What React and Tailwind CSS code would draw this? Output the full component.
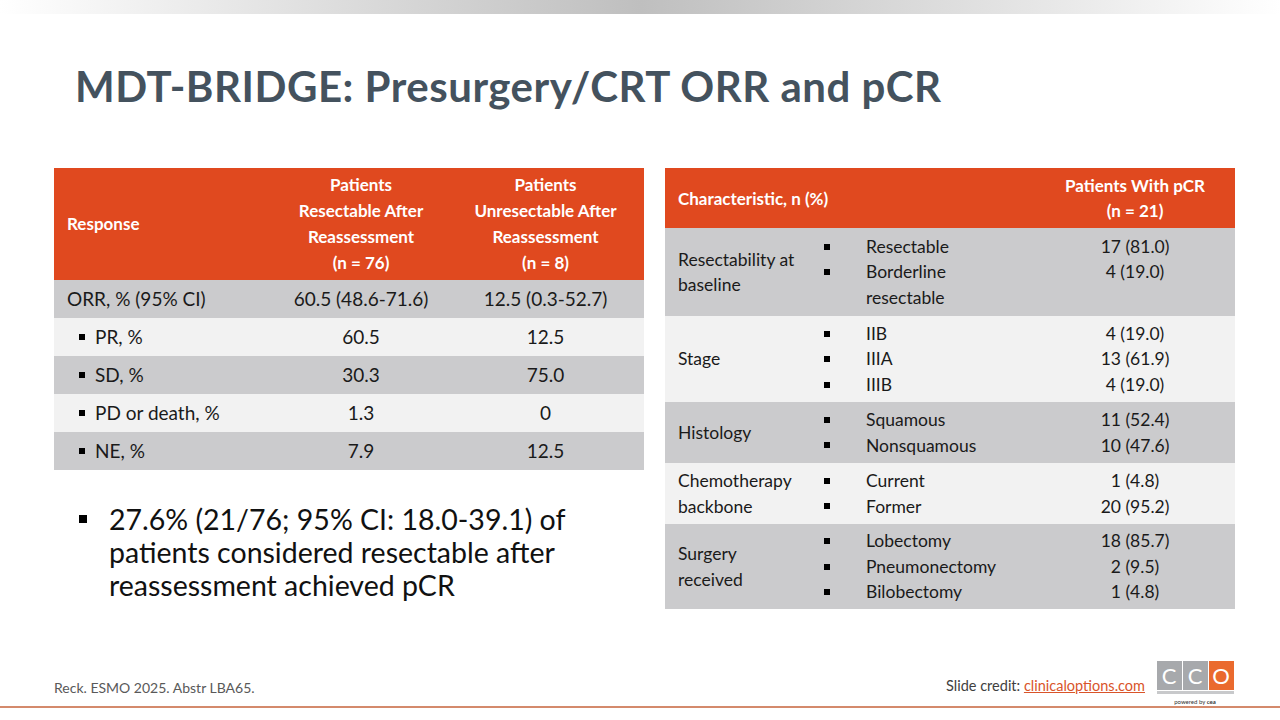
const font = { fontFamily: "Lato, 'Open Sans', sans-serif" };

function Sq() {
  return <span className="block w-[6px] h-[6px] bg-black shrink-0" />;
}

const leftRows = [
  { label: "ORR, % (95% CI)", a: "60.5 (48.6-71.6)", b: "12.5 (0.3-52.7)", bullet: false, bg: "bg-[#cbcbcd]" },
  { label: "PR, %", a: "60.5", b: "12.5", bullet: true, bg: "bg-[#f2f2f2]" },
  { label: "SD, %", a: "30.3", b: "75.0", bullet: true, bg: "bg-[#cbcbcd]" },
  { label: "PD or death, %", a: "1.3", b: "0", bullet: true, bg: "bg-[#f2f2f2]" },
  { label: "NE, %", a: "7.9", b: "12.5", bullet: true, bg: "bg-[#cbcbcd]" },
];

const rightRows = [
  { label: ["Resectability at", "baseline"], items: ["Resectable", "Borderline", "resectable"], vals: ["17 (81.0)", "4 (19.0)", ""], noBullet: [2], bg: "bg-[#cbcbcd]", h: "h-[88px]" },
  { label: ["Stage"], items: ["IIB", "IIIA", "IIIB"], vals: ["4 (19.0)", "13 (61.9)", "4 (19.0)"], noBullet: [], bg: "bg-[#f2f2f2]", h: "h-[86px]" },
  { label: ["Histology"], items: ["Squamous", "Nonsquamous"], vals: ["11 (52.4)", "10 (47.6)"], noBullet: [], bg: "bg-[#cbcbcd]", h: "h-[61px]" },
  { label: ["Chemotherapy", "backbone"], items: ["Current", "Former"], vals: ["1 (4.8)", "20 (95.2)"], noBullet: [], bg: "bg-[#f2f2f2]", h: "h-[61px]" },
  { label: ["Surgery", "received"], items: ["Lobectomy", "Pneumonectomy", "Bilobectomy"], vals: ["18 (85.7)", "2 (9.5)", "1 (4.8)"], noBullet: [], bg: "bg-[#cbcbcd]", h: "h-[85px]" },
];

function LeftTable() {
  return (
    <div className="w-[590px] text-[#1a1a1a]">
      <div className="flex h-[112px] bg-[#e0491f] text-white font-bold text-[17px] leading-[26px]">
        <div className="w-[221px] flex items-center pl-[13px]">Response</div>
        <div className="w-[172px] flex items-center justify-center text-center">
          Patients<br />Resectable After<br />Reassessment<br />(n = 76)
        </div>
        <div className="flex-1 flex items-center justify-center text-center">
          Patients<br />Unresectable After<br />Reassessment<br />(n = 8)
        </div>
      </div>
      {leftRows.map((r) => (
        <div key={r.label} className={`flex h-[38px] items-center text-[19px] ${r.bg}`}>
          <div className="w-[221px] flex items-center gap-[10px] pl-[13px]">
            {r.bullet && <span className="ml-[12px] flex items-center"><Sq /></span>}
            <span>{r.label}</span>
          </div>
          <div className="w-[172px] text-center">{r.a}</div>
          <div className="flex-1 text-center">{r.b}</div>
        </div>
      ))}
    </div>
  );
}

function RightTable() {
  return (
    <div className="w-[570px] text-[#1a1a1a]">
      <div className="flex h-[60px] bg-[#e0491f] text-white font-bold text-[17px] leading-[25px]">
        <div className="flex-1 flex items-center pl-[13px]">Characteristic, n (%)</div>
        <div className="w-[200px] flex items-center justify-center text-center">
          Patients With pCR<br />(n = 21)
        </div>
      </div>
      {rightRows.map((r) => (
        <div key={r.label[0]} className={`flex items-center text-[17.5px] leading-[25.5px] ${r.bg} ${r.h}`}>
          <div className="w-[158px] pl-[13px]">
            {r.label.map((l) => (
              <div key={l}>{l}</div>
            ))}
          </div>
          <div className="flex-1">
            {r.items.map((it, i) => (
              <div key={it} className="flex items-center">
                <span className="w-[43px] pl-[1px] flex items-center">
                  {!r.noBullet.includes(i) && <Sq />}
                </span>
                <span>{it}</span>
              </div>
            ))}
          </div>
          <div className="w-[200px] text-center">
            {r.vals.map((v, i) => (
              <div key={i} className="h-[25.5px]">{v}</div>
            ))}
          </div>
        </div>
      ))}
    </div>
  );
}

function Logo() {
  return (
    <div className="flex flex-col items-center w-[78px]">
      <div className="flex gap-[1px] border-b-[3px] border-[#c8c9cb] pb-[1px]">
        <div className="w-[25px] h-[29px] bg-[#a7a9ac] text-white flex items-center justify-center text-[22px] leading-none">C</div>
        <div className="w-[25px] h-[29px] bg-[#a7a9ac] text-white flex items-center justify-center text-[22px] leading-none">C</div>
        <div className="w-[25px] h-[29px] bg-[#ea6a2e] text-white flex items-center justify-center text-[22px] leading-none">O</div>
      </div>
      <div className="text-[6px] leading-none mt-[5px] text-[#333]">
        powered by <span className="font-bold">cea</span>
      </div>
    </div>
  );
}

export default function App() {
  return (
    <div className="w-[1280px] h-[720px] bg-white relative overflow-hidden flex flex-col" style={font}>
      <div className="h-[14px] w-full bg-gradient-to-r from-white via-[#bfbfbf] to-white" />
      <h1 className="mt-[47px] ml-[75px] text-[42px] font-bold text-[#44525e] leading-[50px] tracking-[0.5px]">
        MDT-BRIDGE: Presurgery/CRT ORR and pCR
      </h1>
      <div className="flex mt-[57px] ml-[54px] gap-[21px]">
        <div className="flex flex-col">
          <LeftTable />
          <div className="flex mt-[33px] ml-[25px] text-[28.5px] leading-[33px] text-[#111]">
            <span className="block mt-[12px] mr-[22px] w-[8px] h-[8px] bg-black shrink-0" />
            <div>
              27.6% (21/76; 95% CI: 18.0-39.1) of<br />
              patients considered resectable after<br />
              reassessment achieved pCR
            </div>
          </div>
        </div>
        <RightTable />
      </div>
      <div className="absolute left-[54px] top-[677px] text-[14px] text-[#595959]">Reck. ESMO 2025. Abstr LBA65.</div>
      <div className="absolute right-[135px] top-[675px] text-[14.5px] text-[#404040]">
        Slide credit: <span className="text-[#d9542a] underline">clinicaloptions.com</span>
      </div>
      <div className="absolute left-[1156px] top-[661px]">
        <Logo />
      </div>
      <div className="absolute left-0 top-[706px] w-full h-[2px] bg-[#d48a6c]" />
    </div>
  );
}
